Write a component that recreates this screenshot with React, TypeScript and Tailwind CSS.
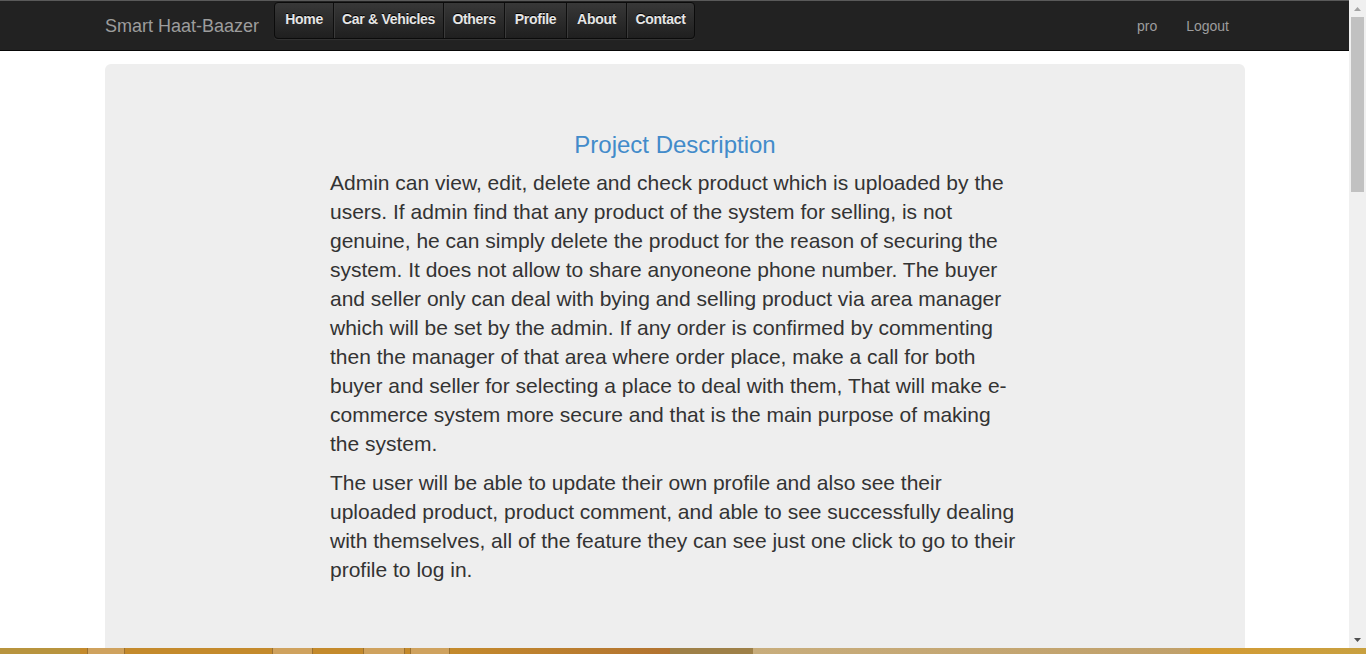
const navItems = [
  { label: "Home", w: "w-[58px]" },
  { label: "Car & Vehicles", w: "w-[110px]" },
  { label: "Others", w: "w-[61px]" },
  { label: "Profile", w: "w-[62px]" },
  { label: "About", w: "w-[60px]" },
  { label: "Contact", w: "w-[68px]" },
];

function Navbar() {
  return (
    <div className="h-[51px] shrink-0 bg-[#222222] border-t border-t-[#5a5a5a] border-b border-b-[#080808] flex items-start">
      <div className="w-[1140px] ml-[105px] flex items-start">
        <span className="mt-[14px] text-[18px] leading-[22px] text-[#9d9d9d]">Smart Haat-Baazer</span>
        <ul className="ml-[15px] mt-px flex h-[37px] rounded-[4px] border border-[#0b0b0b] bg-gradient-to-b from-[#383838] to-[#1f1f1f] shadow-[0_1px_1px_rgba(255,255,255,0.08)] overflow-hidden">
          {navItems.map((item, i) => (
            <li
              key={item.label}
              className={
                item.w +
                " flex items-center justify-center h-full text-[14px] font-bold tracking-[-0.3px] text-[#e6e6e6] [text-shadow:0_-1px_0_#000] " +
                (i > 0 ? "border-l border-l-[#0e0e0e] shadow-[inset_1px_0_0_#3a3a3a]" : "")
              }
            >
              <span className="-mt-[3px] whitespace-nowrap">{item.label}</span>
            </li>
          ))}
        </ul>
        <div className="ml-auto mt-[15px] flex gap-[29px] text-[14px] text-[#9d9d9d] pr-[16px]">
          <span>pro</span>
          <span>Logout</span>
        </div>
      </div>
    </div>
  );
}

function Description() {
  return (
    <div className="shrink-0 mt-[13px] ml-[105px] w-[1140px] h-[700px] rounded-[6px] bg-[#eeeeee] pt-[68px]">
      <h3 className="text-center text-[24px] leading-[26px] text-[#428bca] mb-[10px]">Project Description</h3>
      <div className="ml-[225px] w-[692px] text-[21px] leading-[29px] text-[#333333]">
        <p className="mb-[10px]">
          Admin can view, edit, delete and check product which is uploaded by the users. If admin find that any
          product of the system for selling, is not genuine, he can simply delete the product for the reason of
          securing the system. It does not allow to share anyoneone phone number. The buyer and seller only can deal
          with bying and selling product via area manager which will be set by the admin. If any order is confirmed
          by commenting then the manager of that area where order place, make a call for both buyer and seller for
          selecting a place to deal with them, That will make e-commerce system more secure and that is the main
          purpose of making the system.
        </p>
        <p>
          The user will be able to update their own profile and also see their uploaded product, product comment,
          and able to see successfully dealing with themselves, all of the feature they can see just one click to go
          to their profile to log in.
        </p>
      </div>
    </div>
  );
}

function Scrollbar() {
  return (
    <div className="w-[17px] shrink-0 bg-[#f0f0f0] flex flex-col items-center">
      <div className="h-[17px] flex items-center justify-center">
        <svg width="7" height="4" viewBox="0 0 7 4">
          <path d="M0 4 L3.5 0 L7 4 Z" fill="#a3a3a3" />
        </svg>
      </div>
      <div className="w-[13px] h-[175px] bg-[#c1c1c1]" />
      <div className="flex-1" />
      <div className="h-[17px] flex items-center justify-center">
        <svg width="7" height="4" viewBox="0 0 7 4">
          <path d="M0 0 L7 0 L3.5 4 Z" fill="#505050" />
        </svg>
      </div>
    </div>
  );
}

function Taskbar() {
  return (
    <div className="h-[6px] shrink-0 flex">
      <div className="w-[80px] bg-[#b8943e]" />
      <div className="w-[7px] bg-[#c48a2c]" />
      <div className="w-[38px] bg-[#cfa25e] border-x border-[#9a7030]" />
      <div className="w-[147px] bg-[#c48a2c]" />
      <div className="w-[41px] bg-[#cfa25e] border-x border-[#9a7030]" />
      <div className="w-[50px] bg-[#c48a2c]" />
      <div className="w-[42px] bg-[#cfa25e] border-x border-[#9a7030]" />
      <div className="w-[5px] bg-[#c48a2c]" />
      <div className="w-[40px] bg-[#cfa25e] border-x border-[#9a7030]" />
      <div className="w-[220px] bg-gradient-to-r from-[#c48a2c] to-[#b27330]" />
      <div className="w-[83px] bg-[#9e8048]" />
      <div className="w-[437px] bg-gradient-to-r from-[#c8ad7c] to-[#c0a06a]" />
      <div className="flex-1 bg-gradient-to-r from-[#d49a32] to-[#c8a040]" />
    </div>
  );
}

export default function App() {
  return (
    <div className="h-[654px] w-[1366px] overflow-hidden flex flex-col bg-white font-['Liberation_Sans',Arial,sans-serif]">
      <div className="flex h-[648px]">
        <div className="w-[1349px] flex flex-col overflow-hidden">
          <Navbar />
          <Description />
        </div>
        <Scrollbar />
      </div>
      <Taskbar />
    </div>
  );
}
